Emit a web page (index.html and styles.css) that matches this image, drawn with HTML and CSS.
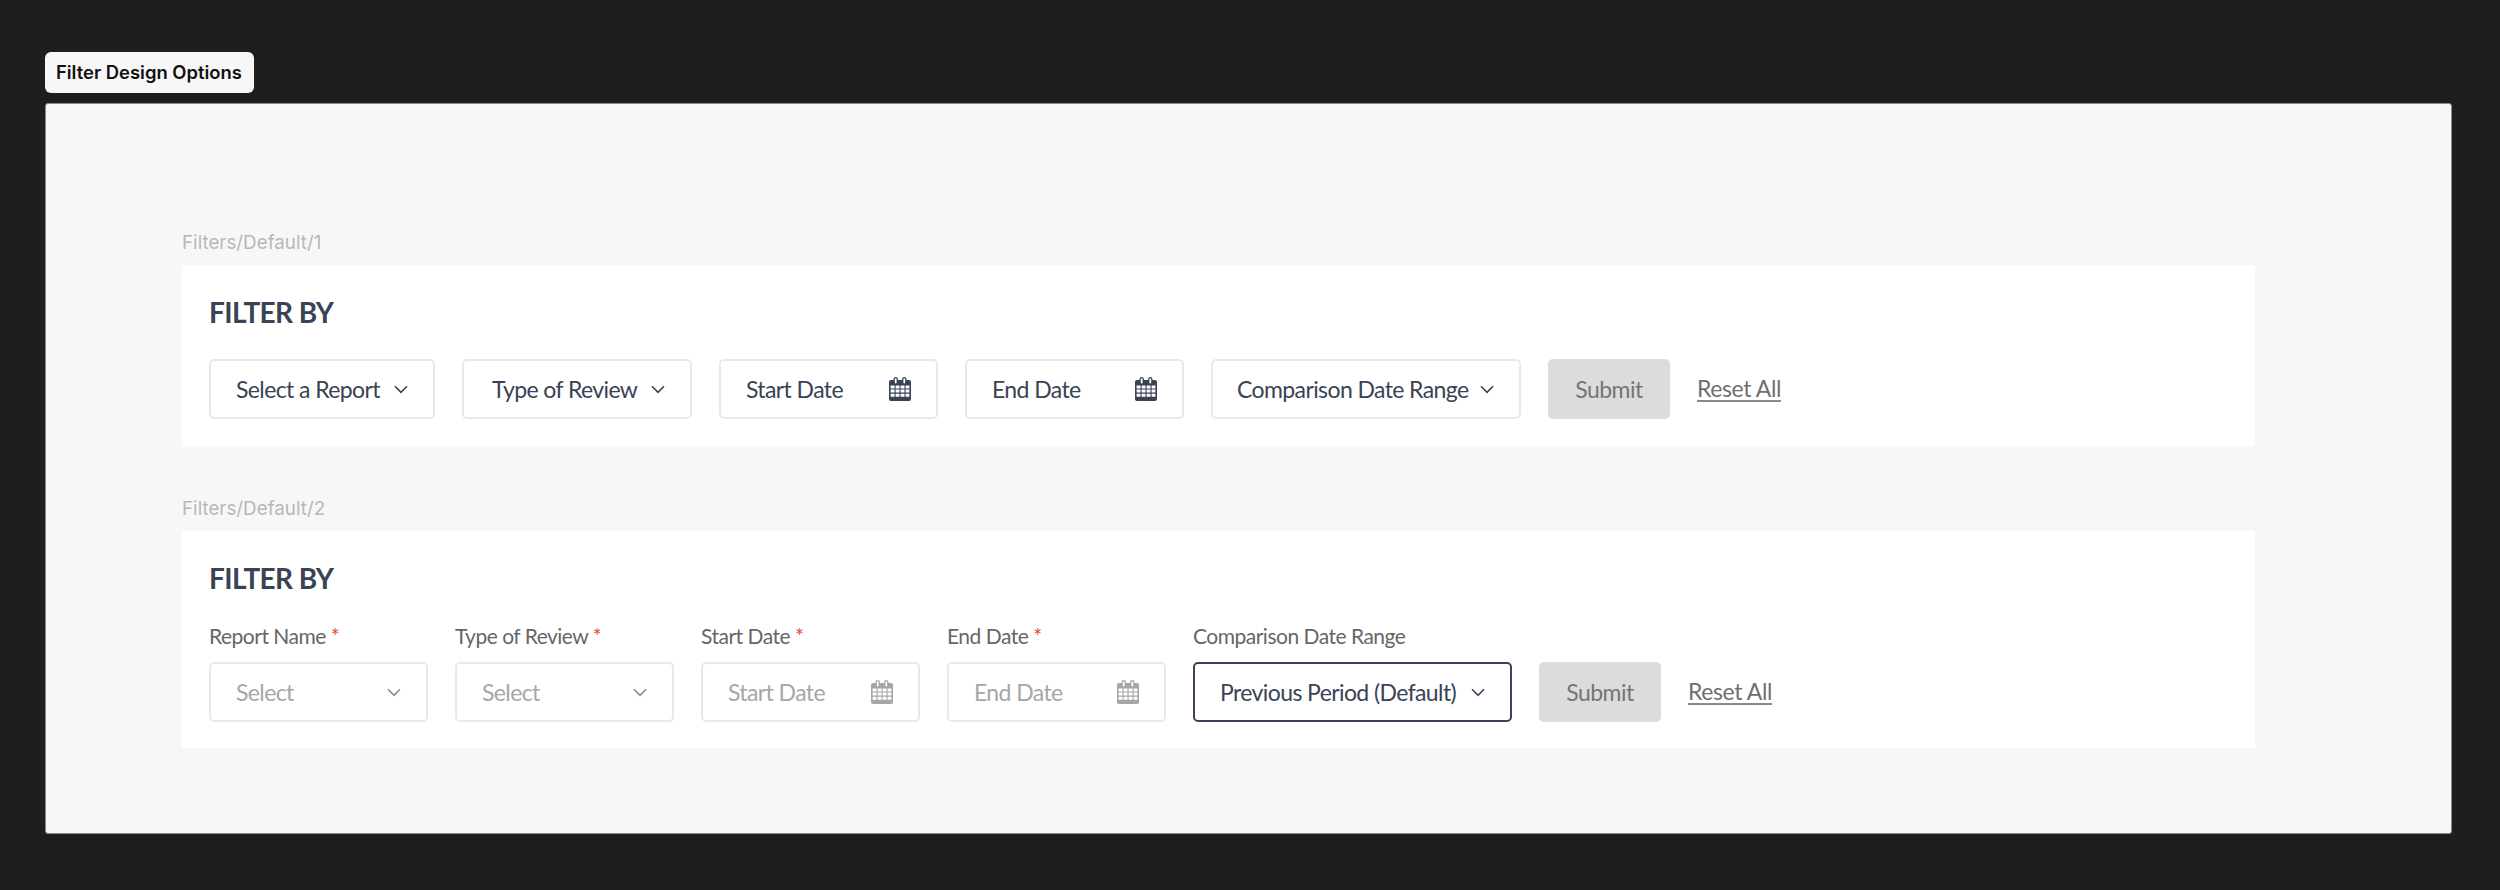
FILE: index.html
```html
<!DOCTYPE html>
<html lang="en">
<head>
<meta charset="utf-8">
<title>Filter Design Options</title>
<link rel="stylesheet" href="styles.css">
</head>
<body>
<svg class="defs" width="0" height="0" aria-hidden="true">
  <symbol id="chev" viewBox="0 0 14 9"><path d="M1 1.2 7 7.4 13 1.2" fill="none" stroke="currentColor" stroke-width="1.6"/></symbol>
  <symbol id="cal" viewBox="0 0 22 24">
    <path fill="currentColor" d="M2 3h2.5V2.2a2.2 2.2 0 0 1 4.4 0V3h4.2v-.8a2.2 2.2 0 0 1 4.4 0V3H20a2 2 0 0 1 2 2v17a2 2 0 0 1-2 2H2a2 2 0 0 1-2-2V5a2 2 0 0 1 2-2Z"/>
    <path fill="#fff" d="M5.8 2.2a.9.9 0 0 1 1.8 0v3.4a.9.9 0 0 1-1.8 0ZM14.4 2.2a.9.9 0 0 1 1.8 0v3.4a.9.9 0 0 1-1.8 0Z"/>
    <path fill="#fff" d="M1.6 8.5h3.9v3H1.6ZM6.6 8.5h3.9v3H6.6ZM11.6 8.5h3.9v3h-3.9ZM16.6 8.5h3.8v3h-3.8ZM1.6 12.6h3.9v3H1.6ZM6.6 12.6h3.9v3H6.6ZM11.6 12.6h3.9v3h-3.9ZM16.6 12.6h3.8v3h-3.8ZM1.6 16.7h3.9v3H1.6ZM6.6 16.7h3.9v3H6.6ZM11.6 16.7h3.9v3h-3.9ZM16.6 16.7h3.8v3h-3.8Z"/>
  </symbol>
</svg>
<main class="page">
  <div class="tag">Filter Design Options</div>
  <section class="card">
    <div class="variant">
      <div class="variant-name">Filters/Default/1</div>
      <div class="panel">
        <h2 class="title">FILTER BY</h2>
        <div class="row">
          <div class="control select w-report"><span>Select a Report</span><svg class="chev"><use href="#chev"/></svg></div>
          <div class="control select w-review"><span>Type of Review</span><svg class="chev"><use href="#chev"/></svg></div>
          <div class="control date"><span>Start Date</span><svg class="cal"><use href="#cal"/></svg></div>
          <div class="control date"><span>End Date</span><svg class="cal"><use href="#cal"/></svg></div>
          <div class="control select w-compare"><span>Comparison Date Range</span><svg class="chev"><use href="#chev"/></svg></div>
          <div class="button">Submit</div>
          <a class="reset" href="#">Reset All</a>
        </div>
      </div>
    </div>
    <div class="variant">
      <div class="variant-name">Filters/Default/2</div>
      <div class="panel panel-labelled">
        <h2 class="title">FILTER BY</h2>
        <div class="row">
          <div class="field"><label class="label">Report Name <i>*</i></label>
            <div class="control date muted"><span>Select</span><svg class="chev"><use href="#chev"/></svg></div></div>
          <div class="field"><label class="label">Type of Review <i>*</i></label>
            <div class="control date muted"><span>Select</span><svg class="chev"><use href="#chev"/></svg></div></div>
          <div class="field"><label class="label">Start Date <i>*</i></label>
            <div class="control date muted"><span>Start Date</span><svg class="cal"><use href="#cal"/></svg></div></div>
          <div class="field"><label class="label">End Date <i>*</i></label>
            <div class="control date muted"><span>End Date</span><svg class="cal"><use href="#cal"/></svg></div></div>
          <div class="field"><label class="label">Comparison Date Range</label>
            <div class="control select active w-period"><span>Previous Period (Default)</span><svg class="chev"><use href="#chev"/></svg></div></div>
          <div class="button">Submit</div>
          <a class="reset" href="#">Reset All</a>
        </div>
      </div>
    </div>
  </section>
</main>
</body>
</html>
```
FILE: styles.css
```css
* { box-sizing: border-box; }
html, body { margin: 0; height: 100%; }
body { background: #1e1e1e; font-family: "Lato", sans-serif; overflow: hidden; }
.defs { position: absolute; }
.page { padding: 52px 48px 0 45px; }
.tag {
  display: inline-block;
  width: 209px;
  height: 41px;
  padding: 0 11px;
  border-radius: 6px;
  background: #f7f7f7;
  color: #111;
  font: 600 18.4px/41px "Inter", sans-serif;
  white-space: nowrap;
  vertical-align: top;
}
.card {
  margin-top: 10px;
  width: 2407px;
  height: 731px;
  padding: 126px 196px 0 136px;
  background: #f7f7f7;
  border: 1px solid #8a8a8a;
  border-radius: 3px;
  display: flex;
  flex-direction: column;
  gap: 50px;
}
.variant-name {
  height: 25px;
  margin-bottom: 10px;
  color: #b8b8b8;
  font: 400 18.8px/25px "Inter", sans-serif;
}
.panel { background: #fff; padding: 27px; }
.panel-labelled { padding-bottom: 26px; }
.title {
  margin: 0 0 27px;
  color: #3a4256;
  font: 700 28px/40px "Lato", sans-serif;
  letter-spacing: -0.6px;
}
.row { display: flex; align-items: flex-end; gap: 27px; }
.field { display: flex; flex-direction: column; }
.label {
  height: 26px;
  margin-bottom: 11px;
  color: #666;
  font-size: 21px;
  line-height: 21px;
  letter-spacing: -0.5px;
}
.label i { color: #e24b4b; font-style: normal; }
.control {
  height: 60px;
  display: flex;
  align-items: center;
  justify-content: space-between;
  border: 2px solid #e6eaef;
  border-radius: 5px;
  background: #fff;
  color: #3a4256;
  font-size: 23px;
  letter-spacing: -0.6px;
  line-height: 52px;
  padding: 0 25px;
}
.select { padding-right: 25px; }
.date { width: 219px; }
.w-report { width: 226px; }
.w-review { width: 230px; padding-left: 28px; }
.w-compare { width: 310px; padding-left: 24px; }
.w-period { width: 319px; }
.muted { color: #a6a6a6; }
.active { border-color: #3a4256; }
.chev { width: 14px; height: 9px; flex: none; }
.cal { width: 22px; height: 24px; flex: none; }
.muted .chev { color: #8c8c8c; }
.button {
  width: 122px;
  height: 60px;
  display: flex;
  align-items: center;
  justify-content: center;
  border-radius: 5px;
  background: #dcdcdc;
  color: #757575;
  font-size: 23px;
  letter-spacing: -0.5px;
  line-height: 52px;
}
.reset {
  height: 60px;
  line-height: 58px;
  color: #6f6f6f;
  font-size: 23px;
  letter-spacing: -0.4px;
  text-decoration: underline;
  text-decoration-color: #8a8a8a;
  text-underline-offset: 3px;
}
```
